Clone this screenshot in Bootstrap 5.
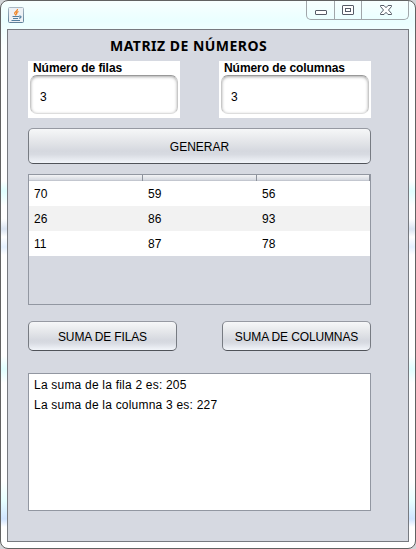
<!DOCTYPE html>
<html lang="es">
<head>
<meta charset="utf-8">
<meta name="viewport" content="width=device-width, initial-scale=1">
<title>Matriz de números</title>
<link href="https://cdn.jsdelivr.net/npm/bootstrap@5.3.0/dist/css/bootstrap.min.css" rel="stylesheet">
<style>
body{width:416px;height:549px;background:#d3d5d8;font:12px/14px "Liberation Sans",Arial,sans-serif;color:#000}
.window{width:416px;height:549px;border:1px solid #626262;border-radius:8px;padding:0 6px 6px;
background:linear-gradient(#fff0 180px,#e0ffff 190px,#fff0 205px,#fff0 218px,#a9bfe070 228px,#fff0 236px,#b8d8ff60 246px,#fff0 254px,#fff0 355px,#e0ffff 368px,#fff0 382px,#fff0 480px,#e6ffff 500px,#d0e4ff 518px,#fff0 526px),linear-gradient(#f8ffff,#eaffff 20px,#fbffff 45px,#fff 80px)}
.titlebar{height:28px}
.app-icon{margin:6px 0 0 1px}
.controls{width:103px;height:19px;border:1px solid #a1a6aa;border-top:0;border-radius:0 0 5px 5px}
.content-pane{height:513px;padding:0 37px 0 20px;background:#d6d9e1;border:1px solid #777a80}
.heading{height:31px;padding:7px 0 0 82px;font:bold 14px/17px "Noto Sans",sans-serif;letter-spacing:.48px;white-space:nowrap}
.field-group{width:152px;height:57px;padding:0 2px}
.field-group label{padding-left:3px;height:14px;display:block;font-weight:bold;letter-spacing:-.06px;white-space:nowrap}
.field-group .form-control{height:39px;padding:4px 9px 0;font:inherit;color:#000;border:1px solid #c8c8c8;border-top-color:#999;border-bottom-color:#ddd;border-radius:7px;box-shadow:inset 0 1px 3px #aaa}
.metal{height:30px;width:149px;padding:1px 0 0;font:inherit;color:#000;letter-spacing:-.13px;border:1px solid #777b82;border-top-color:#9699a2;border-bottom-color:#505359;border-radius:5px;white-space:nowrap;background:linear-gradient(#f6f7f8,#e2e4e8 40%,#d5d8df 65%,#d8dbe2 75%,#f2f5fa)}
.metal.wide{height:36px;width:343px;margin-top:10px;letter-spacing:0}
.grid-box{height:131px;margin-top:10px;border:1px solid #9297a1}
.head-strip{height:6px;background:linear-gradient(#f3f4f6,#d9dce3 75%,#b8bcc5)}
.head-strip div{width:114px;border-right:1px solid #8c919b}
.head-strip div,.data-row div{flex:0 0 114px}
.head-strip div:last-child,.data-row div:last-child{flex-basis:113px}
.data-row{height:25px;padding-top:6px;background:#fff}
.data-row.alt{background:#f2f2f2}
.data-row div{padding-left:5px}
.output{height:138px;margin-top:22px;padding:1px 5px;border:1px solid #9297a1;background:#fff;line-height:20px;letter-spacing:.21px}
</style>
<script src="https://cdn.jsdelivr.net/npm/bootstrap@5.3.0/dist/js/bootstrap.bundle.min.js"></script>
</head>
<body class="overflow-hidden">
<div class="window">
  <header class="titlebar d-flex justify-content-between align-items-start">
    <svg class="app-icon" width="16" height="16" viewBox="0 0 16 16"><defs><linearGradient id="g" x2="0" y2="1"><stop stop-color="#a9b8c4"/><stop offset="1" stop-color="#5f8199"/></linearGradient></defs><rect x=".5" y=".5" width="15" height="15" rx="1" fill="#edf1f5" stroke="url(#g)"/><path d="M9.500 2C10 4 6 4.800 6.700 6.500L8 8.500M10.500 4.500C8.500 5.500 8 6.200 9 7.500" fill="none" stroke="#f08220" stroke-width="1.300"/><path d="M4.500 9.500H11M5 11.500H10M3.500 13.500H12M11 9.200C14 8.500 13.500 11 11 11.300" fill="none" stroke="#527f9f" stroke-width="1.100"/></svg>
    <div class="controls">
      <svg class="d-block" width="101" height="18" viewBox="0 0 101 18"><path d="M27.500 0V18M54.500 0V18" stroke="#a1a6aa"/><g fill="#fff" stroke="#565c67"><rect x="8.500" y="9.500" width="11" height="4" rx=".5"/><rect x="35.500" y="4.500" width="11" height="9" rx=".5"/><rect x="38.500" y="7.500" width="5" height="3"/><path d="M73.500 4.500H77L79 6.700L81 4.500H84.500V5.500L81.500 9L84.500 12.500V13.500H81L79 11.300L77 13.500H73.500V12.500L76.500 9L73.500 5.500Z"/></g></svg>
    </div>
  </header>
  <main class="content-pane">
    <h1 class="heading m-0">MATRIZ DE NÚMEROS</h1>
    <div class="d-flex justify-content-between">
      <div class="field-group bg-white"><label for="filas">Número de filas</label><input id="filas" class="form-control" value="3"></div>
      <div class="field-group bg-white"><label for="cols">Número de columnas</label><input id="cols" class="form-control" value="3"></div>
    </div>
    <button class="btn metal wide d-block">GENERAR</button>
    <div class="grid-box">
      <div class="head-strip d-flex"><div></div><div></div><div></div></div>
      <div class="data-row d-flex"><div>70</div><div>59</div><div>56</div></div>
      <div class="data-row alt d-flex"><div>26</div><div>86</div><div>93</div></div>
      <div class="data-row d-flex"><div>11</div><div>87</div><div>78</div></div>
    </div>
    <div class="d-flex justify-content-between mt-3"><button class="btn metal">SUMA DE FILAS</button><button class="btn metal">SUMA DE COLUMNAS</button></div>
    <div class="output"><div>La suma de la fila 2 es: 205</div><div>La suma de la columna 3 es: 227</div></div>
  </main>
</div>
</body>
</html>
